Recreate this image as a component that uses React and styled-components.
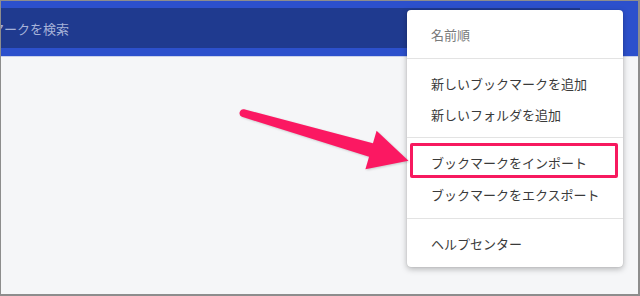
import React from "react";
import styled, { createGlobalStyle, css } from "styled-components";

const Global = createGlobalStyle`
  html, body { margin: 0; padding: 0; background: #f5f6f8; }
  body { font-family: "Noto Sans CJK JP", "Noto Sans", sans-serif; }
  * { box-sizing: border-box; }
`;

const Frame = styled.div`
  position: relative;
  width: 640px;
  height: 296px;
  display: flex;
  flex-direction: column;
  border-style: solid;
  border-color: #8d8d8d;
  border-width: 1px 2px 2px 1px;
  background: #f5f6f8;
  overflow: hidden;
`;

const Header = styled.header`
  flex: none;
  height: 56px;
  padding: 7px 0 8px;
  background: #2c50cc;
  border-bottom: 1px solid #c9d1ea;
  display: flex;
`;

const SearchBar = styled.div`
  width: 579px;
  height: 40px;
  background: #1f3a8f;
  display: flex;
  align-items: center;
  overflow: hidden;
`;

const SearchText = styled.span`
  margin-left: -10px;
  font-size: 13px;
  color: #a7b3d9;
  white-space: nowrap;
  letter-spacing: 0;
`;

const Content = styled.main`
  flex: 1;
  background: #f5f6f8;
`;

const Menu = styled.div`
  position: absolute;
  left: 406px;
  top: 9px;
  width: 216px;
  background: #ffffff;
  border-radius: 4px;
  box-shadow: 0 2px 6px rgba(0, 0, 0, 0.28), 0 0 1px rgba(0, 0, 0, 0.25);
  display: flex;
  flex-direction: column;
`;

const Section = styled.div`
  padding: 8px 0;
  display: flex;
  flex-direction: column;
  & + & {
    border-top: 1px solid #e3e3e3;
  }
`;

const Item = styled.div`
  position: relative;
  height: ${(p) => p.$h || 32}px;
  display: flex;
  align-items: center;
  padding-left: 24px;
  font-size: 13px;
  color: ${(p) => (p.$muted ? "#7a7a7a" : "#3a3a3a")};
  white-space: nowrap;
  ${(p) =>
    p.$highlight &&
    css`
      &::after {
        content: "";
        position: absolute;
        left: 3px;
        right: 5px;
        top: -3px;
        bottom: 0;
        border: 3px solid #f7195f;
        border-radius: 2px;
      }
    `}
`;

const ArrowLayer = styled.svg`
  position: absolute;
  left: -1px;
  top: -1px;
  width: 640px;
  height: 296px;
  pointer-events: none;
  filter: drop-shadow(1px 1px 1px rgba(0, 0, 0, 0.18));
`;

export default function App() {
  return (
    <>
      <Global />
      <Frame>
        <Header>
          <SearchBar>
            <SearchText>マークを検索</SearchText>
          </SearchBar>
        </Header>
        <Content />
        <Menu>
          <Section>
            <Item $muted>名前順</Item>
          </Section>
          <Section>
            <Item>新しいブックマークを追加</Item>
            <Item $h={30}>新しいフォルダを追加</Item>
          </Section>
          <Section>
            <Item $highlight>ブックマークをインポート</Item>
            <Item>ブックマークをエクスポート</Item>
          </Section>
          <Section>
            <Item>ヘルプセンター</Item>
          </Section>
        </Menu>
        <ArrowLayer viewBox="0 0 640 296">
          <path
            d="M 244.1 109.2 L 372.95 143.3 L 376.6 130.8 L 408.5 160.8 L 365.4 169.2 L 369.05 156.7 L 241.9 116.8 A 4 4 0 0 1 244.1 109.2 Z"
            fill="#fb1862"
          />
        </ArrowLayer>
      </Frame>
    </>
  );
}
